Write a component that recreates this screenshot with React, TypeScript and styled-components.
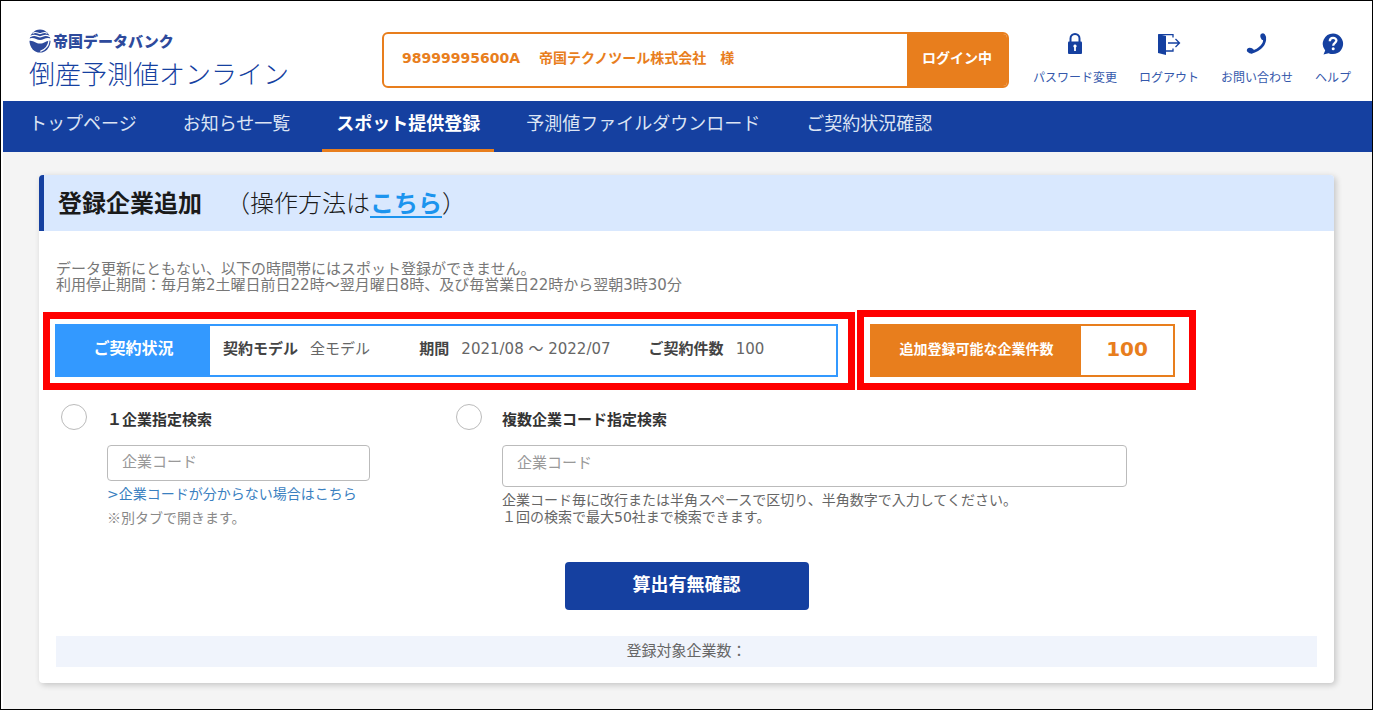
import React from 'react';
import styled, { createGlobalStyle } from 'styled-components';

const navy = '#1540a0';
const orange = '#e87e1d';
const sky = '#3399ff';
const cjk = '"Noto Sans CJK JP", sans-serif';

const GlobalStyle = createGlobalStyle`
  *, *::before, *::after { box-sizing: border-box; }
  body {
    margin: 0;
    background: #fff;
    color: #555;
    font-family: "DejaVu Sans", ${cjk};
    font-size: 15px;
  }
  h1, p, ul, dl, dd { margin: 0; padding: 0; }
  button, input, textarea { font-family: inherit; }
`;

const Page = styled.div`
  display: flex;
  flex-direction: column;
  min-height: 100vh;
  padding-left: 2px;
  border: 1px solid #000;
`;

const Header = styled.header`
  display: flex;
  align-items: flex-start;
  height: 100px;
  padding: 28px 21px 0 26px;
`;

const Brand = styled.a`
  display: flex;
  flex: 0 0 353px;
  flex-direction: column;
  color: ${navy};
  text-decoration: none;
  white-space: nowrap;
  font-family: ${cjk};
`;

const Company = styled.span`
  display: flex;
  align-items: center;
  gap: 2px;
  color: #2e4a9c;
  font-size: 15px;
  font-weight: 900;
  line-height: 24px;
`;

const Service = styled.span`
  font-size: 26px;
  font-weight: 300;
  line-height: 40px;
`;

const LoginBox = styled.div`
  display: flex;
  flex: 1;
  height: 56px;
  margin: 3px 24px 0 0;
  overflow: hidden;
  border: 2px solid ${orange};
  border-radius: 6px;
  color: ${orange};
  font-size: 14px;
  font-weight: 700;
  line-height: 48px;
  white-space: nowrap;
`;

const LoginUser = styled.div`
  display: flex;
  flex: 1;
  gap: 19px;
  padding-left: 18px;
`;

const LoginState = styled.div`
  flex: 0 0 100px;
  background: ${orange};
  color: #fff;
  text-align: center;
`;

const Tools = styled.nav`
  display: flex;
  gap: 22px;
`;

const Tool = styled.a`
  display: flex;
  flex-direction: column;
  align-items: center;
  gap: 11px;
  padding-top: 3px;
  color: #3558ab;
  font-family: ${cjk};
  font-size: 12px;
  line-height: 20px;
  text-decoration: none;
  white-space: nowrap;
`;

const MainNav = styled.nav`
  display: flex;
  gap: 18px;
  height: 51px;
  padding-left: 12px;
  background: ${navy};
`;

const NavLink = styled.a<{ $active?: boolean }>`
  padding: 0 14px;
  border-bottom: 3px solid ${p => (p.$active ? orange : 'transparent')};
  color: ${p => (p.$active ? '#fff' : '#dce4f4')};
  font-family: ${cjk};
  font-size: 18px;
  font-weight: ${p => (p.$active ? 700 : 400)};
  line-height: 42px;
  text-decoration: none;
  white-space: nowrap;
`;

const Main = styled.main`
  flex: 1;
  padding: 23px 38px 25px 36px;
  background: #f4f4f4;
`;

const Card = styled.section`
  overflow: hidden;
  padding-bottom: 16px;
  border-radius: 4px;
  background: #fff;
  box-shadow: 2px 2px 6px rgba(0, 0, 0, 0.2);
`;

const CardHeader = styled.header`
  display: flex;
  align-items: center;
  gap: 24px;
  height: 56px;
  padding: 0 0 4px 14px;
  border-left: 5px solid ${navy};
  background: #d9e8fe;
  color: #1a1a1a;
  font-family: ${cjk};
  font-size: 24px;
  font-weight: 300;
`;

const Title = styled.h1`
  font-size: 24px;
  font-weight: 700;
`;

const HelpLink = styled.a`
  color: #1c94ee;
  font-weight: 700;
  text-underline-offset: 4px;
  text-decoration-thickness: 2px;
`;

const Notice = styled.p`
  padding: 30px 17px 0;
  color: #777;
  line-height: 16px;
`;

const StatusRow = styled.div`
  display: flex;
  align-items: flex-end;
  gap: 2px;
  padding: 17px 4px 0;
`;

const Highlight = styled.div<{ $width: number; $pad: string }>`
  flex: 0 1 ${p => p.$width}px;
  padding: ${p => p.$pad};
  border: 7px solid #f00;
`;

const StatusBox = styled.div<{ $color: string }>`
  display: flex;
  height: 53px;
  border: 2px solid ${p => p.$color};
  line-height: 46px;
  white-space: nowrap;
`;

const StatusLabel = styled.div<{ $color: string; $width: number; $size: number }>`
  flex: 0 0 ${p => p.$width}px;
  background: ${p => p.$color};
  color: #fff;
  font-size: ${p => p.$size}px;
  font-weight: 700;
  text-align: center;
`;

const Facts = styled.dl`
  display: grid;
  flex: 1;
  grid-template-columns: 197fr 230fr 188fr;
  padding-left: 13px;
`;

const Fact = styled.div`
  display: flex;
  gap: 12px;

  dt { color: #444; font-weight: 700; }
  dd { color: #666; }
`;

const Remaining = styled.output`
  flex: 1;
  color: ${orange};
  font-size: 20px;
  font-weight: 700;
  text-align: center;
`;

const SearchRow = styled.div`
  display: flex;
  padding: 14px 22px 0;
`;

const Option = styled.div<{ $width: number }>`
  display: grid;
  flex: 0 1 ${p => p.$width}px;
  grid-template-columns: 26px minmax(0, 1fr);
  column-gap: 20px;
  row-gap: 15px;
  align-content: start;
`;

const Radio = styled.input`
  width: 26px;
  height: 26px;
  margin: 0;
  appearance: none;
  border: 1px solid #bbb;
  border-radius: 50%;
  background: #fff;

  &:checked { border: 8px solid ${navy}; }
`;

const OptionLabel = styled.label`
  color: #333;
  font-family: ${cjk};
  font-weight: 700;
  line-height: 30px;
  height: 26px;
`;

const OptionBody = styled.div`
  display: flex;
  grid-column: 2;
  flex-direction: column;
  align-items: flex-start;
  color: #666;
  font-size: 14px;
  line-height: 17px;
`;

const CodeInput = styled.input`
  width: 263px;
  max-width: 100%;
  height: 36px;
  padding: 0 14px 2px;
  border: 1px solid #bbb;
  border-radius: 4px;
  font-size: 15px;

  &::placeholder { color: #999; }
`;

const CodeArea = styled.textarea`
  width: 100%;
  height: 42px;
  margin-bottom: 5px;
  padding: 6px 14px;
  resize: none;
  border: 1px solid #bbb;
  border-radius: 4px;
  font-size: 15px;
  line-height: 22px;

  &::placeholder { color: #999; }
`;

const LookupLink = styled.a`
  color: #3a80c0;
  line-height: 26px;
  text-decoration: none;
`;

const TabNote = styled.span`
  color: #888;
  font-family: ${cjk};
  line-height: 20px;
`;

const SubmitButton = styled.button`
  display: block;
  width: 244px;
  height: 48px;
  margin: 35px auto 26px;
  padding: 0 0 6px;
  border: 0;
  border-radius: 4px;
  background: ${navy};
  color: #fff;
  font-size: 18px;
  font-weight: 700;
`;

const TotalBar = styled.p`
  margin: 0 17px;
  padding-bottom: 4px;
  background: #f0f4fc;
  color: #666;
  font-family: ${cjk};
  line-height: 27px;
  text-align: center;
`;

const Emblem = () => (
  <svg width="22" height="24" viewBox="0 0 22 24" aria-hidden="true">
    <ellipse cx="11" cy="12" rx="10.5" ry="11.5" fill="#2e4a9c" />
    <g fill="none" stroke="#fff" strokeLinecap="round">
      <path d="M4 4.200C7 2.200 9 4.600 11 4.600s4-2.400 7-.4" strokeWidth="1.100" />
      <path d="M1.500 7.500C6 4.400 8.500 7.800 11 7.800s5-3.400 9.500-.3" strokeWidth="1.300" />
      <path d="M19.800 12.500c-.4 4.800-3.400 7.700-8 9.700" strokeWidth="1.300" />
    </g>
    <path d="M0 9.600C5 7.800 7.500 11 11 11s6-3.200 11-1.400v2.200c-5-1-6.500 2.800-11 2.800-4.300 0-6-3.600-11-2.800z" fill="#fff" />
  </svg>
);

const LockIcon = () => (
  <svg width="16" height="24" viewBox="0 0 16 24" aria-hidden="true">
    <path d="M3.500 10V6.500a4.500 4.500 0 0 1 9 0V10" fill="none" stroke={navy} strokeWidth="2" />
    <rect x="1" y="9.500" width="14" height="12.500" rx="1" fill={navy} />
    <path d="M8 12.500a1.700 1.700 0 0 1 .9 3.100V19H7.100v-3.400A1.700 1.700 0 0 1 8 12.500z" fill="#fff" />
  </svg>
);

const LogoutIcon = () => (
  <svg width="24" height="24" viewBox="0 0 24 24" aria-hidden="true">
    <path d="M1 2l8 2v19l-8-2z" fill={navy} />
    <g fill="none" stroke={navy} strokeWidth="1.300">
      <path d="M2 2.700h14v2.800" />
      <path d="M16 16.500v2.500H9" />
      <path d="M11 11h11.500M18.500 7l4 4-4 4" />
    </g>
  </svg>
);

const PhoneIcon = () => (
  <svg width="22" height="24" viewBox="0 0 22 24" aria-hidden="true">
    <path d="M18.600 5C19.500 11.500 15 18 5 20.300" fill="none" stroke={navy} strokeWidth="2.800" />
    <ellipse cx="17.200" cy="4.800" rx="2.700" ry="3.500" transform="rotate(-20 17.200 4.800)" fill={navy} />
    <ellipse cx="4.400" cy="18.600" rx="3.600" ry="2.700" transform="rotate(20 4.400 18.600)" fill={navy} />
  </svg>
);

const HelpIcon = () => (
  <svg width="22" height="24" viewBox="0 0 22 24" aria-hidden="true">
    <path d="M11 1.500a10.300 10.300 0 1 1-4.400 19.700L1.500 22.500l1.700-4.100A10.300 10.300 0 0 1 11 1.500z" fill={navy} />
    <path d="M7.800 9.200c0-4.400 6.600-4.100 6.600-.6 0 2.300-3.200 2.300-3.200 5.200" fill="none" stroke="#fff" strokeWidth="2.300" />
    <circle cx="11.200" cy="16.800" r="1.500" fill="#fff" />
  </svg>
);

const tools = [
  { label: 'パスワード変更', Icon: LockIcon },
  { label: 'ログアウト', Icon: LogoutIcon },
  { label: 'お問い合わせ', Icon: PhoneIcon },
  { label: 'ヘルプ', Icon: HelpIcon },
];

const navItems = ['トップページ', 'お知らせ一覧', 'スポット提供登録', '予測値ファイルダウンロード', 'ご契約状況確認'];

const facts = [
  ['契約モデル', '全モデル'],
  ['期間', '2021/08 ～ 2022/07'],
  ['ご契約件数', '100'],
];

export default function App() {
  return (
    <Page lang="ja">
      <GlobalStyle />
      <Header>
        <Brand href="#">
          <Company><Emblem />帝国データバンク</Company>
          <Service>倒産予測値オンライン</Service>
        </Brand>
        <LoginBox>
          <LoginUser>
            <span>98999995600A</span>
            <span>帝国テクノツール株式会社　様</span>
          </LoginUser>
          <LoginState>ログイン中</LoginState>
        </LoginBox>
        <Tools>
          {tools.map(({ label, Icon }) => (
            <Tool href="#" key={label}><Icon />{label}</Tool>
          ))}
        </Tools>
      </Header>
      <MainNav>
        {navItems.map((item, i) => (
          <NavLink href="#" key={item} $active={i === 2}>{item}</NavLink>
        ))}
      </MainNav>
      <Main>
        <Card>
          <CardHeader>
            <Title>登録企業追加</Title>
            <span>（操作方法は<HelpLink href="#">こちら</HelpLink>）</span>
          </CardHeader>
          <Notice>
            データ更新にともない、以下の時間帯にはスポット登録ができません。<br />
            利用停止期間：毎月第2土曜日前日22時～翌月曜日8時、及び毎営業日22時から翌朝3時30分
          </Notice>
          <StatusRow>
            <Highlight $width={812} $pad="5px 10px 6px 5px">
              <StatusBox $color={sky}>
                <StatusLabel $color={sky} $width={153} $size={16}>ご契約状況</StatusLabel>
                <Facts>
                  {facts.map(([term, value]) => (
                    <Fact key={term}><dt>{term}</dt><dd>{value}</dd></Fact>
                  ))}
                </Facts>
              </StatusBox>
            </Highlight>
            <Highlight $width={339} $pad="7px 14px 6px 6px">
              <StatusBox $color={orange}>
                <StatusLabel $color={orange} $width={209} $size={14}>追加登録可能な企業件数</StatusLabel>
                <Remaining>100</Remaining>
              </StatusBox>
            </Highlight>
          </StatusRow>
          <SearchRow>
            <Option $width={395}>
              <Radio type="radio" name="mode" id="mode-single" />
              <OptionLabel htmlFor="mode-single">１企業指定検索</OptionLabel>
              <OptionBody>
                <CodeInput type="text" placeholder="企業コード" aria-label="企業コード" />
                <LookupLink href="#">&gt;企業コードが分からない場合はこちら</LookupLink>
                <TabNote>※別タブで開きます。</TabNote>
              </OptionBody>
            </Option>
            <Option $width={671}>
              <Radio type="radio" name="mode" id="mode-multi" />
              <OptionLabel htmlFor="mode-multi">複数企業コード指定検索</OptionLabel>
              <OptionBody>
                <CodeArea placeholder="企業コード" aria-label="企業コード（複数）" />
                <p>
                  企業コード毎に改行または半角スペースで区切り、半角数字で入力してください。<br />
                  １回の検索で最大50社まで検索できます。
                </p>
              </OptionBody>
            </Option>
          </SearchRow>
          <SubmitButton type="button">算出有無確認</SubmitButton>
          <TotalBar>登録対象企業数：</TotalBar>
        </Card>
      </Main>
    </Page>
  );
}
